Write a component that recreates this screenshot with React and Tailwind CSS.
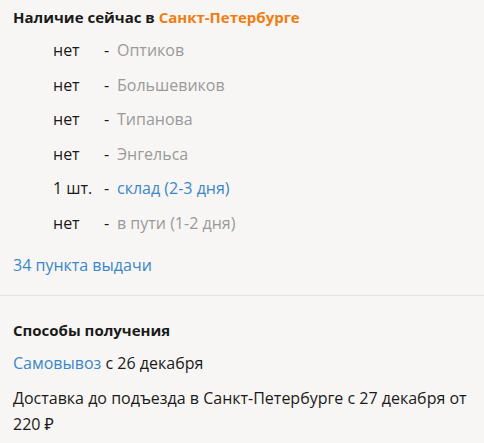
import React from 'react';

const stores = [
  { qty: 'нет', name: 'Оптиков', active: false },
  { qty: 'нет', name: 'Большевиков', active: false },
  { qty: 'нет', name: 'Типанова', active: false },
  { qty: 'нет', name: 'Энгельса', active: false },
  { qty: '1 шт.', name: 'склад (2-3 дня)', active: true },
  { qty: 'нет', name: 'в пути (1-2 дня)', active: false },
];

const App = () => {
  return (
    <div
      className="min-h-screen bg-[#f8f6f4] text-[16px] text-[#1a1a1a]"
      style={{ fontFamily: '"Open Sans", "Noto Sans", sans-serif' }}
    >
      <div className="px-[13px] pt-[6px] pb-[19px]">
        <h2 className="font-bold text-[15px] leading-[22px]">
          Наличие сейчас в <span className="text-[#f07d10]">Санкт-Петербурге</span>
        </h2>
        <div className="mt-[5px] pl-[40px]">
          {stores.map((store) => (
            <div key={store.name} className="flex h-[34.5px] items-center">
              <span className="w-[51px]">{store.qty}</span>
              <span className="w-[13px]">-</span>
              <span className={store.active ? 'text-[#3a87c8]' : 'text-[#9a9a9a]'}>{store.name}</span>
            </div>
          ))}
        </div>
        <a className="mt-[14px] block text-[#3a87c8] leading-[22px]">34 пункта выдачи</a>
      </div>
      <div className="border-t border-[#e4e2e0] px-[13px] pt-[23px]">
        <h3 className="font-bold text-[15px] leading-[22px]">Способы получения</h3>
        <p className="mt-[11px] leading-[22px]">
          <a className="text-[#3a87c8]">Самовывоз</a> с 26 декабря
        </p>
        <p className="mt-[11px] leading-[26px]">
          Доставка до подъезда в Санкт-Петербурге с 27 декабря от 220 ₽
        </p>
      </div>
    </div>
  );
};

export default App;
